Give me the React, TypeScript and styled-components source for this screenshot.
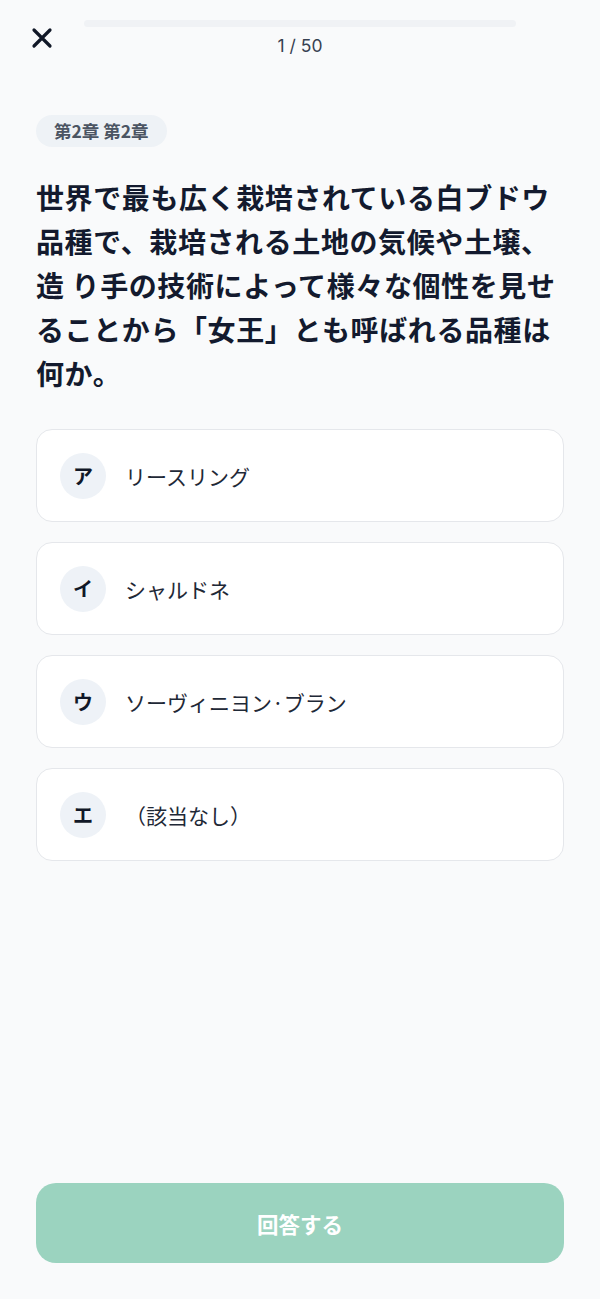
import { createGlobalStyle, styled } from "styled-components";

const GlobalStyle = createGlobalStyle`
  * {
    box-sizing: border-box;
  }
  body {
    margin: 0;
    background: #f9fafb;
    font-family: "Noto Sans CJK JP", "Noto Sans", sans-serif;
    color: #111827;
  }
`;

const options = [
  { mark: "ア", label: "リースリング" },
  { mark: "イ", label: "シャルドネ" },
  { mark: "ウ", label: "ソーヴィニヨン·ブラン" },
  { mark: "エ", label: "（該当なし）" },
];

const App = () => {
  return (
    <>
      <GlobalStyle />
      <Page>
        <Header>
          <CloseButton aria-label="close">
            <svg width="22" height="22" viewBox="0 0 22 22">
              <path
                d="M3 3 L19 19 M19 3 L3 19"
                stroke="#111827"
                strokeWidth="3.2"
                strokeLinecap="round"
              />
            </svg>
          </CloseButton>
          <Progress>
            <Track>
              <Fill style={{ width: `${(1 / 50) * 0}%` }} />
            </Track>
            <Counter>1 / 50</Counter>
          </Progress>
        </Header>

        <Content>
          <Chapter>第2章 第2章</Chapter>
          <Question>
            世界で最も広く栽培されている白ブドウ品種で、栽培される土地の気候や土壌、造
            り手の技術によって様々な個性を見せることから「女王」とも呼ばれる品種は何か。
          </Question>
          <OptionList>
            {options.map((o) => (
              <OptionCard key={o.mark}>
                <Mark>{o.mark}</Mark>
                <OptionText>{o.label}</OptionText>
              </OptionCard>
            ))}
          </OptionList>
        </Content>

        <Footer>
          <SubmitButton disabled>回答する</SubmitButton>
        </Footer>
      </Page>
    </>
  );
};

export default App;

const Page = styled.div`
  min-height: 100vh;
  display: flex;
  flex-direction: column;
`;

const Header = styled.header`
  display: grid;
  grid-template-columns: 60px 1fr 60px;
  align-items: start;
  padding: 18px 24px 0;
`;

const CloseButton = styled.button`
  width: 40px;
  height: 40px;
  border: none;
  background: transparent;
  padding: 0;
  display: flex;
  align-items: center;
  justify-content: center;
  cursor: pointer;
  margin-left: -2px;
`;

const Progress = styled.div`
  display: flex;
  flex-direction: column;
  align-items: center;
  padding-top: 2px;
`;

const Track = styled.div`
  width: 100%;
  height: 7px;
  border-radius: 4px;
  background: #f0f2f5;
  overflow: hidden;
`;

const Fill = styled.div`
  height: 100%;
  background: #34b38a;
`;

const Counter = styled.span`
  margin-top: 7px;
  font-family: Inter, "Noto Sans", sans-serif;
  font-size: 17.5px;
  line-height: 24px;
  color: #374151;
`;

const Content = styled.main`
  flex: 1;
  padding: 0 36px;
  display: flex;
  flex-direction: column;
  align-items: flex-start;
`;

const Chapter = styled.span`
  margin-top: 57px;
  padding: 5px 18px;
  border-radius: 999px;
  background: #eef2f6;
  color: #4b5563;
  font-size: 17.5px;
  line-height: 22px;
  font-weight: 700;
`;

const Question = styled.h1`
  margin: 28px 0 0;
  font-size: 28px;
  line-height: 44px;
  letter-spacing: 0.6px;
  font-weight: 700;
  color: #131a2e;
`;

const OptionList = styled.div`
  margin-top: 34px;
  width: 100%;
  display: flex;
  flex-direction: column;
  gap: 20px;
`;

const OptionCard = styled.button`
  width: 100%;
  height: 93px;
  padding: 0 23px;
  display: flex;
  align-items: center;
  gap: 19px;
  background: #ffffff;
  border: 1px solid #e5e7eb;
  border-radius: 16px;
  font-family: inherit;
  text-align: left;
  cursor: pointer;
`;

const Mark = styled.span`
  width: 46px;
  height: 46px;
  flex-shrink: 0;
  border-radius: 50%;
  background: #eef2f7;
  display: flex;
  align-items: center;
  justify-content: center;
  font-size: 20px;
  font-weight: 700;
  color: #111827;
`;

const OptionText = styled.span`
  font-size: 21px;
  color: #1f2937;
`;

const Footer = styled.footer`
  padding: 0 36px 36px;
`;

const SubmitButton = styled.button`
  width: 100%;
  height: 80px;
  border: none;
  border-radius: 20px;
  background: #9bd3bf;
  color: #ffffff;
  font-family: inherit;
  font-size: 21.5px;
  font-weight: 700;
  cursor: not-allowed;
`;
